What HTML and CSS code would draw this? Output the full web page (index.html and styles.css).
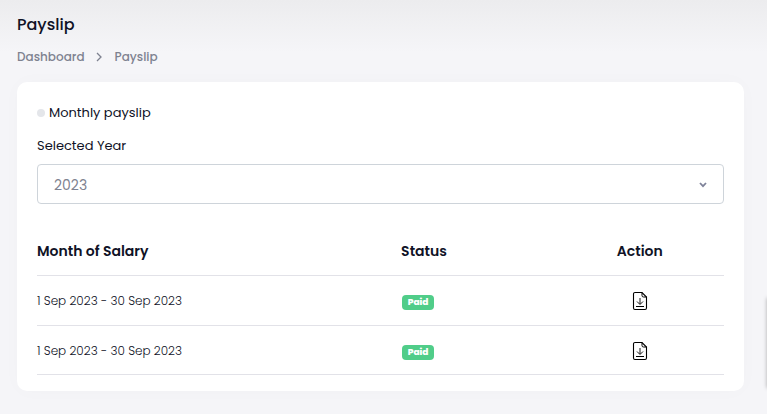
FILE: index.html
```html
<!DOCTYPE html>
<html lang="en">
<head>
    <meta charset="UTF-8">
    <meta name="viewport" content="width=device-width, initial-scale=1.0">
    <title>Payslip</title>
    <link rel="stylesheet" href="styles.css">
</head>
<body>
<main class="page">
    <h1>Payslip</h1>
    <nav class="breadcrumb" aria-label="Breadcrumb">
        <a href="#">Dashboard</a>
        <svg width="8" height="10" viewBox="0 0 8 10" fill="none" stroke="currentColor" stroke-width="1.3"><path d="M1 1l4 4-4 4"/></svg>
        <a href="#">Payslip</a>
    </nav>

    <section class="card">
        <h2><span class="dot"></span>Monthly payslip</h2>
        <label for="year">Selected Year</label>
        <div class="select-box">
            <select name="year" id="year">
                <option value="2023">2023</option>
            </select>
            <svg class="arrow" width="8" height="6" viewBox="0 0 8 6" fill="none" stroke="currentColor" stroke-width="1.8"><path d="M1 1l3 3.200 3-3.200"/></svg>
        </div>

        <table>
            <thead>
                <tr>
                    <th class="month">Month of Salary</th>
                    <th class="status">Status</th>
                    <th class="action">Action</th>
                </tr>
            </thead>
            <tbody>
                <tr>
                    <td>1 Sep 2023 - 30 Sep 2023</td>
                    <td><span class="badge">Paid</span></td>
                    <td class="action">
                        <button type="button" aria-label="Download payslip">
                            <svg width="16" height="20" viewBox="0 0 16 20" fill="none" stroke="currentColor"><path d="M3 1.500h7l4.500 4.500V17a1.500 1.500 0 0 1-1.500 1.500H3A1.500 1.500 0 0 1 1.500 17V3A1.500 1.500 0 0 1 3 1.500z" stroke-width="1.100"/><path d="M10 1.500V4.500a1.500 1.500 0 0 0 1.500 1.500h3"/><path d="M8 7v6M5 10.500l3 3 3-3" stroke-width=".9"/><path d="M4 15.500h8"/></svg>
                        </button>
                    </td>
                </tr>
                <tr>
                    <td>1 Sep 2023 - 30 Sep 2023</td>
                    <td><span class="badge">Paid</span></td>
                    <td class="action">
                        <button type="button" aria-label="Download payslip">
                            <svg width="16" height="20" viewBox="0 0 16 20" fill="none" stroke="currentColor"><path d="M3 1.500h7l4.500 4.500V17a1.500 1.500 0 0 1-1.500 1.500H3A1.500 1.500 0 0 1 1.500 17V3A1.500 1.500 0 0 1 3 1.500z" stroke-width="1.100"/><path d="M10 1.500V4.500a1.500 1.500 0 0 0 1.500 1.500h3"/><path d="M8 7v6M5 10.500l3 3 3-3" stroke-width=".9"/><path d="M4 15.500h8"/></svg>
                        </button>
                    </td>
                </tr>
            </tbody>
        </table>
    </section>
</main>
<div class="side-tab"></div>
</body>
</html>
```
FILE: styles.css
```css
* {
    box-sizing: border-box;
}

body {
    margin: 0;
    font-family: Poppins, Inter, sans-serif;
    font-size: 13px;
    line-height: 20px;
    color: #0f1226;
    background: #f5f5f8 linear-gradient(#ececee, #f5f5f8) no-repeat 0 0 / 100% 52px;
}

.page {
    padding: 13px 23px 23px 17px;
}

h1 {
    margin: 0;
    font-size: 16px;
    line-height: 24px;
    font-weight: 500;
}

.breadcrumb {
    display: flex;
    align-items: center;
    gap: 11px;
    margin: 10px 0 15px;
    font-size: 12px;
    font-weight: 500;
}

.breadcrumb,
.breadcrumb a {
    color: #7e8290;
    text-decoration: none;
}

.card {
    padding: 21px 20px 16px;
    background: #fff;
    border-radius: 10px;
    box-shadow: 0 0 20px rgba(76, 87, 125, 0.02);
}

h2 {
    display: flex;
    align-items: center;
    gap: 4px;
    margin: 0 0 13px;
    font-size: 13px;
    font-weight: 400;
}

.dot {
    width: 8px;
    height: 8px;
    border-radius: 50%;
    background: #e4e6ea;
}

label {
    display: block;
    margin-bottom: 8px;
}

.select-box {
    position: relative;
    margin-bottom: 22px;
}

select {
    display: block;
    width: 100%;
    height: 40px;
    padding: 1px 40px 0 16px;
    font: inherit;
    font-size: 14px;
    color: #7e8290;
    background: #fff;
    border: 1px solid #ced4da;
    border-radius: 4px;
    appearance: none;
}

.arrow {
    position: absolute;
    right: 17px;
    top: 18px;
    color: #7e8299;
    pointer-events: none;
}

table {
    width: 100%;
    table-layout: fixed;
    border-collapse: collapse;
}

th,
td {
    height: 50px;
    padding: 2px 0 0;
    text-align: left;
    vertical-align: middle;
    border-bottom: 1px solid #e2e2e8;
}

th {
    height: 49px;
    font-size: 14px;
    font-weight: 600;
}

td {
    font-size: 12px;
    font-weight: 300;
}

tr:last-child td {
    height: 49px;
}

.month {
    width: 53%;
}

.status {
    width: 22.5%;
}

.action {
    text-align: center;
}

.badge {
    display: block;
    width: 32px;
    margin: 3px 0 0 1px;
    font-size: 9px;
    line-height: 15px;
    font-weight: 800;
    text-align: center;
    color: #fff;
    background: #50cd89;
    border-radius: 4px;
}

button {
    display: block;
    margin: 0 auto;
    padding: 0;
    border: none;
    background: none;
    color: #000;
    cursor: pointer;
}

button svg {
    display: block;
}

.side-tab {
    position: fixed;
    left: 100%;
    top: 298px;
    width: 40px;
    height: 90px;
    box-shadow: 0 0 4px rgba(0, 0, 0, 0.3);
}
```
